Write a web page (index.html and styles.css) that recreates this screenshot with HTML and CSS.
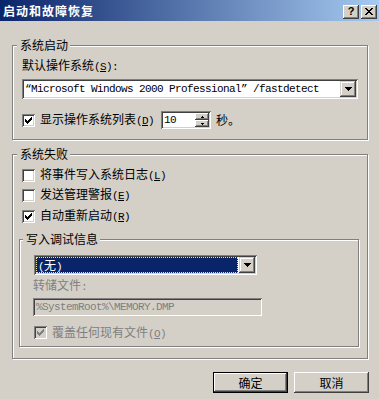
FILE: index.html
```html
<!DOCTYPE html>
<html lang="zh-CN">
<head>
<meta charset="utf-8">
<title>启动和故障恢复</title>
<link rel="stylesheet" href="styles.css">
</head>
<body>
<div class="titlebar">
  <span class="title">启动和故障恢复</span>
  <div class="caption-buttons">
    <span class="cap-btn help">?</span>
    <span class="cap-btn close"><svg width="8" height="7" viewBox="0 0 8 7" shape-rendering="crispEdges"><path fill="#000" d="M0 0h2v1H0zM6 0h2v1H6zM1 1h2v1H1zM5 1h2v1H5zM2 2h4v1H2zM3 3h2v1H3zM2 4h4v1H2zM1 5h2v1H1zM5 5h2v1H5zM0 6h2v1H0zM6 6h2v1H6z"/></svg></span>
  </div>
</div>
<div class="client">
  <fieldset class="group g-startup">
    <legend>系统启动</legend>
    <div class="label">默认操作系统<span class="m">(<u>S</u>):</span></div>
    <div class="combo os-combo">
      <div class="combo-text m">“Microsoft Windows 2000 Professional” /fastdetect</div>
      <span class="drop-btn"><svg width="7" height="4" viewBox="0 0 7 4" shape-rendering="crispEdges"><path fill="#000" d="M0 0h7v1H0zM1 1h5v1H1zM2 2h3v1H2zM3 3h1v1H3z"/></svg></span>
    </div>
    <div class="list-row">
      <span class="cb"><svg width="13" height="13" viewBox="0 0 13 13" shape-rendering="crispEdges"><path fill="#000" d="M3 5h1v3H3zM4 6h1v3H4zM5 7h1v3H5zM6 6h1v3H6zM7 5h1v3H7zM8 4h1v3H8zM9 3h1v3H9z"/></svg></span>
      <span class="cb-label">显示操作系统列表<span class="m">(<u>D</u>)</span></span>
      <div class="spin">
        <span class="spin-text m">10</span>
        <span class="spin-btns">
          <span class="spin-btn"><svg width="3" height="2" viewBox="0 0 3 2" shape-rendering="crispEdges"><path fill="#000" d="M1 0h1v1H1zM0 1h3v1H0z"/></svg></span>
          <span class="spin-btn"><svg width="3" height="2" viewBox="0 0 3 2" shape-rendering="crispEdges"><path fill="#000" d="M0 0h3v1H0zM1 1h1v1H1z"/></svg></span>
        </span>
      </div>
      <span class="unit">秒。</span>
    </div>
  </fieldset>

  <fieldset class="group g-failure">
    <legend>系统失败</legend>
    <div class="check-row first">
      <span class="cb"></span>
      <span class="cb-label">将事件写入系统日志<span class="m">(<u>L</u>)</span></span>
    </div>
    <div class="check-row">
      <span class="cb"></span>
      <span class="cb-label">发送管理警报<span class="m">(<u>E</u>)</span></span>
    </div>
    <div class="check-row third">
      <span class="cb"><svg width="13" height="13" viewBox="0 0 13 13" shape-rendering="crispEdges"><path fill="#000" d="M3 5h1v3H3zM4 6h1v3H4zM5 7h1v3H5zM6 6h1v3H6zM7 5h1v3H7zM8 4h1v3H8zM9 3h1v3H9z"/></svg></span>
      <span class="cb-label">自动重新启动<span class="m">(<u>R</u>)</span></span>
    </div>

    <fieldset class="group g-debug">
      <legend>写入调试信息</legend>
      <div class="combo debug-combo">
        <div class="sel-item"><span class="m">(</span>无<span class="m">)</span></div>
        <span class="drop-btn"><svg width="7" height="4" viewBox="0 0 7 4" shape-rendering="crispEdges"><path fill="#000" d="M0 0h7v1H0zM1 1h5v1H1zM2 2h3v1H2zM3 3h1v1H3z"/></svg></span>
      </div>
      <div class="dump-label disabled">转储文件<span class="m">:</span></div>
      <div class="textbox disabled m">%SystemRoot%\MEMORY.DMP</div>
      <div class="check-row overwrite">
        <span class="cb cb-disabled"><svg width="13" height="13" viewBox="0 0 13 13" shape-rendering="crispEdges"><path fill="#808080" d="M3 5h1v3H3zM4 6h1v3H4zM5 7h1v3H5zM6 6h1v3H6zM7 5h1v3H7zM8 4h1v3H8zM9 3h1v3H9z"/></svg></span>
        <span class="cb-label disabled">覆盖任何现有文件<span class="m">(<u>O</u>)</span></span>
      </div>
    </fieldset>
  </fieldset>

  <div class="buttons">
    <button class="btn default">确定</button>
    <button class="btn">取消</button>
  </div>
</div>
</body>
</html>
```
FILE: styles.css
```css
* { box-sizing: border-box; }

html, body {
  margin: 0;
  padding: 0;
}

body {
  width: 379px;
  height: 399px;
  overflow: hidden;
  background: #d4d0c8;
  font-family: "Noto Sans CJK SC", sans-serif;
  font-size: 12px;
  line-height: 14px;
  color: #000;
}

.m {
  font-family: "Liberation Mono", "Noto Sans CJK SC", monospace;
  font-size: 11px;
  letter-spacing: -0.6px;
}

.m u {
  text-decoration: underline;
  text-underline-offset: 1px;
}

/* Title bar */
.titlebar {
  height: 21px;
  display: flex;
  justify-content: space-between;
  align-items: flex-start;
  padding: 3px 2px 0 3px;
  background: linear-gradient(to right, #0a246a, #a6caf0);
}

.title {
  color: #fff;
  font-weight: bold;
  letter-spacing: 1px;
  line-height: 16px;
}

.caption-buttons {
  display: flex;
  gap: 2px;
  margin-top: 2px;
}

.cap-btn {
  width: 16px;
  height: 14px;
  display: flex;
  align-items: center;
  justify-content: center;
  background: #d4d0c8;
  box-shadow: inset -1px -1px #404040, inset 1px 1px #fff, inset -2px -2px #808080;
}

.cap-btn.help {
  font-family: "Liberation Sans", sans-serif;
  font-weight: bold;
  font-size: 11px;
  line-height: 11px;
  padding-bottom: 1px;
}

.cap-btn.close svg {
  margin-bottom: 1px;
}

/* Client area */
.client {
  padding: 17px 0 0 12px;
}

.group {
  margin: 0;
  min-width: 0;
  border: 1px solid #808080;
  box-shadow: inset 1px 1px #fff, 1px 1px #fff;
}

.group > legend {
  line-height: 14px;
  background: #d4d0c8;
  padding: 0 2px 0 3px;
}

.g-startup {
  width: 356px;
  padding: 0 9px 10px 9px;
}

.g-startup > legend { margin-left: -5px; }

.label { margin-top: 6px; }

/* Combo box */
.combo {
  height: 20px;
  display: flex;
  padding: 2px;
  background: #fff;
  box-shadow: inset 1px 1px #808080, inset -1px -1px #fff, inset 2px 2px #404040, inset -2px -2px #d4d0c8;
}

.os-combo { margin-top: 5px; }

.combo-text {
  flex: 1;
  line-height: 16px;
  padding-left: 1px;
  white-space: nowrap;
  overflow: hidden;
}

.drop-btn {
  width: 16px;
  height: 16px;
  display: flex;
  align-items: center;
  justify-content: center;
  background: #d4d0c8;
  box-shadow: inset -1px -1px #404040, inset 1px 1px #d4d0c8, inset -2px -2px #808080, inset 2px 2px #fff;
}

/* Checkbox */
.cb {
  width: 13px;
  height: 13px;
  flex: none;
  display: block;
  background: #fff;
  box-shadow: inset 1px 1px #808080, inset -1px -1px #fff, inset 2px 2px #404040, inset -2px -2px #d4d0c8;
  margin-right: 5px;
}

.cb svg { display: block; }

.cb-disabled { background: #d4d0c8; }

.list-row {
  margin-top: 12px;
  height: 18px;
  display: flex;
  align-items: center;
}

/* Spin box */
.spin {
  width: 50px;
  height: 18px;
  margin-left: 7px;
  display: flex;
  padding: 2px;
  background: #fff;
  box-shadow: inset 1px 1px #808080, inset -1px -1px #fff, inset 2px 2px #404040, inset -2px -2px #d4d0c8;
}

.spin-text {
  flex: 1;
  line-height: 14px;
  padding-left: 1px;
}

.spin-btns {
  width: 14px;
  display: flex;
  flex-direction: column;
}

.spin-btn {
  flex: 1;
  display: flex;
  align-items: center;
  justify-content: center;
  background: #d4d0c8;
  box-shadow: inset -1px -1px #404040, inset 1px 1px #fff, inset -2px -2px #808080;
}

.unit { margin-left: 5px; }

/* System failure group */
.g-failure {
  width: 356px;
  margin-top: 7px;
  padding: 0 8px 11px 6px;
}

.g-failure > legend { margin-left: -2px; }

.check-row {
  height: 20px;
  display: flex;
  align-items: center;
  padding-left: 3px;
}

.check-row.first { margin-top: 4px; }
.check-row.third { margin-top: 1px; }

/* Debug info group */
.g-debug {
  width: 340px;
  margin-top: 6px;
  padding: 0 12px 4px 13px;
}

.g-debug > legend { margin-left: -10px; }

.debug-combo {
  width: 223px;
  margin-top: 9px;
  margin-left: 1px;
}

.sel-item {
  flex: 1;
  background: #0a246a;
  color: #fff;
  border: 1px dotted #e8e4b0;
  line-height: 14px;
  padding-left: 1px;
  margin-right: 1px;
}

.disabled { color: #808080; }

.dump-label { margin-top: 3px; }

.textbox {
  width: 229px;
  height: 18px;
  margin-top: 4px;
  padding: 2px 0 0 3px;
  line-height: 14px;
  background: #d4d0c8;
  box-shadow: inset 1px 1px #808080, inset -1px -1px #fff, inset 2px 2px #404040, inset -2px -2px #d4d0c8;
}

.check-row.overwrite {
  margin-top: 7px;
  height: 19px;
  padding-left: 1px;
}

/* Buttons */
.buttons {
  margin-top: 13px;
  padding-right: 10px;
  display: flex;
  justify-content: flex-end;
  gap: 6px;
}

.btn {
  width: 75px;
  height: 21px;
  margin: 0;
  padding: 0;
  border: none;
  background: #d4d0c8;
  font-family: "Noto Sans CJK SC", sans-serif;
  font-size: 12px;
  line-height: 14px;
  color: #000;
  box-shadow: inset -1px -1px #404040, inset 1px 1px #fff, inset -2px -2px #808080;
}

.btn.default {
  border: 1px solid #000;
  box-shadow: inset -1px -1px #404040, inset 1px 1px #fff, inset -2px -2px #808080;
}
```
